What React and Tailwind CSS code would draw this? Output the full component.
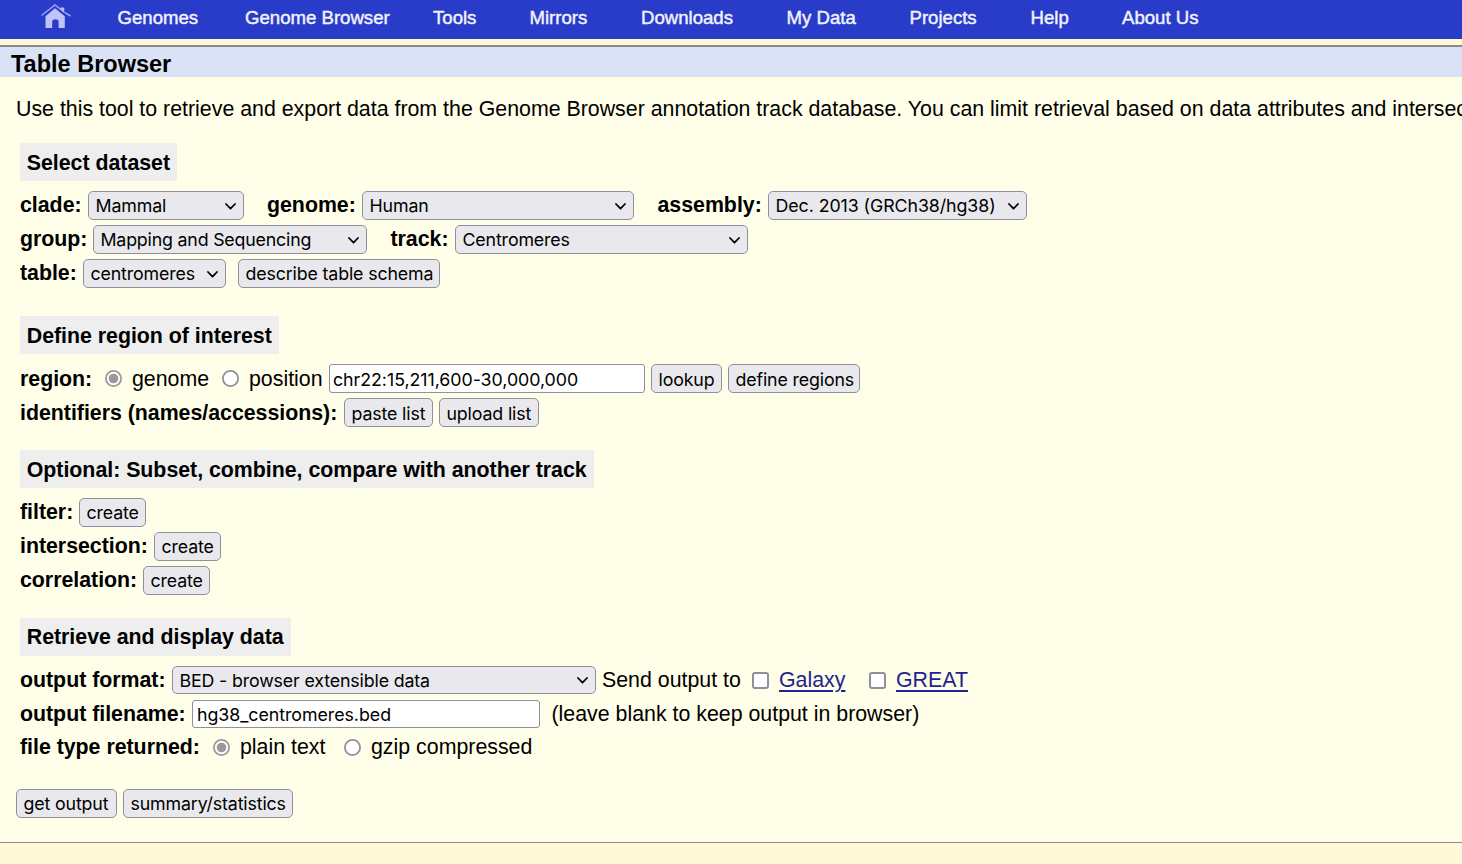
import React from "react";

const Label = ({ className = "", children }) => (
  <span className={`shrink-0 whitespace-nowrap font-bold leading-[28px] tracking-[-0.02px] ${className}`}>{children}</span>
);

const Text = ({ className = "", children }) => (
  <span className={`shrink-0 whitespace-nowrap leading-[28px] ${className}`}>{children}</span>
);

const Select = ({ className = "", tracking = "tracking-[-0.14px]", height = "h-[29px]", children }) => (
  <div
    role="combobox"
    className={`flex shrink-0 items-center justify-between rounded-[5px] border border-[#8f8f9d] bg-[#e9e9ed] pl-[6.5px] pr-[7.5px] font-['Inter',sans-serif] text-[17.8px] ${height} ${className}`}
  >
    <span className={`whitespace-nowrap pt-px leading-[26px] ${tracking}`}>{children}</span>
    <svg className="mt-px h-[7px] w-[11px] shrink-0" viewBox="0 0 11 7" fill="none" stroke="black" strokeWidth="1.75" strokeLinecap="round" strokeLinejoin="round">
      <path d="M1 1 L5.5 5.7 L10 1" />
    </svg>
  </div>
);

const Button = ({ className = "", textClass = "pt-px", children }) => (
  <button
    type="button"
    className={`flex h-[29px] shrink-0 items-center rounded-[5px] border border-[#8f8f9d] bg-[#e9e9ed] pl-[6.5px] font-['Inter',sans-serif] text-[17.8px] tracking-[-0.14px] ${className}`}
  >
    <span className={`whitespace-nowrap leading-[26px] ${textClass}`}>{children}</span>
  </button>
);

const Field = ({ className = "", value }) => (
  <input
    type="text"
    readOnly
    value={value}
    className={`shrink-0 rounded-[3px] border border-[#8f8f9d] bg-white font-['Inter',sans-serif] text-[17.8px] tracking-[-0.04px] ${className}`}
  />
);

const Radio = ({ checked, className = "mt-[6px]" }) => (
  <svg className={`h-[17px] w-[17px] shrink-0 ${className}`} viewBox="0 0 17 17">
    <circle cx="8.5" cy="8.5" r="7.6" fill="white" stroke={checked ? "#9a9a9a" : "#8f8f9d"} strokeWidth="1.8" />
    {checked && <circle cx="8.5" cy="8.5" r="4.8" fill="#999999" />}
  </svg>
);

const Check = ({ className = "" }) => (
  <span className={`mt-[6px] h-[17px] w-[17px] shrink-0 rounded-[3px] border-2 border-[#8f8f9d] bg-white ${className}`} />
);

const Heading = ({ className = "", leading = "leading-[40px]", children }) => (
  <h2 className={`h-[38px] whitespace-nowrap bg-[#eeeeee] pl-[6.75px] font-bold tracking-[-0.02px] ${leading} ${className}`}>{children}</h2>
);

const Row = ({ className = "h-[34px]", children }) => <div className={`flex items-start ${className}`}>{children}</div>;

export default function App() {
  return (
    <div className="flex h-[864px] w-full flex-col overflow-hidden bg-[#fff8d9] font-['Liberation_Sans',sans-serif] text-[21.35px] text-black">
      <nav className="flex h-[39px] shrink-0 items-start whitespace-nowrap bg-[#293bc9] pl-[41px] text-[18.6px] leading-[35px] text-[#f2f2fb] [-webkit-text-stroke:0.45px_#f2f2fb]">
        <a className="w-[76.5px] pt-[4px]">
          <svg className="h-[25px] w-[30px]" viewBox="0 0 30 25">
            <path d="M0.5 11.5 L14 1 L20 5.6 M23.5 8.3 L29.5 12" fill="none" stroke="#9da3ee" strokeWidth="1.5" />
            <path d="M19.5 3.6 H23.3 V9 L19.5 6 Z" fill="#b9bdf6" />
            <path d="M4.5 12.2 L14 4.3 L23.8 12.2 V24 H17.6 V17.5 Q17.4 15.2 14.4 15.2 Q11.4 15.2 11.2 17.5 V24 H4.5 Z" fill="#bfc3f6" />
          </svg>
        </a>
        <a className="w-[127.5px]">Genomes</a>
        <a className="w-[188px]">Genome Browser</a>
        <a className="w-[96.5px]">Tools</a>
        <a className="w-[111.5px]">Mirrors</a>
        <a className="w-[145.5px]">Downloads</a>
        <a className="w-[123px]">My Data</a>
        <a className="w-[121px]">Projects</a>
        <a className="w-[91.5px]">Help</a>
        <a>About Us</a>
      </nav>

      <main className="mt-[6px] flex h-[798px] shrink-0 flex-col items-stretch border-b border-t-2 border-b-[#8a8a8a] border-t-[#888888] bg-[#fffee8]">
        <h1 className="h-[30px] shrink-0 bg-[#dae2f5] pl-[11px] text-[23.5px] font-bold leading-[34px]">Table Browser</h1>
        <p className="mt-[19px] h-[26px] whitespace-nowrap pl-[16px] leading-[26px]">
          Use this tool to retrieve and export data from the Genome Browser annotation track database. You can limit retrieval based on data attributes and intersec
        </p>

        <div className="mt-[21px] pl-[20px]">
          <Heading className="w-[157px]">Select dataset</Heading>
          <div className="mt-[10px]">
            <Row>
              <Label className="w-[68px]">clade:</Label>
              <Select className="w-[156px]">Mammal</Select>
              <Label className="ml-[23px] w-[95px]">genome:</Label>
              <Select className="w-[272px]">Human</Select>
              <Label className="ml-[23.5px] w-[110.5px]">assembly:</Label>
              <Select className="w-[259px]" tracking="tracking-[-0.07px]">Dec. 2013 (GRCh38/hg38)</Select>
            </Row>
            <Row>
              <Label className="w-[73px]">group:</Label>
              <Select className="w-[274px]" tracking="tracking-[-0.19px]">Mapping and Sequencing</Select>
              <Label className="ml-[23.5px] w-[64.5px]">track:</Label>
              <Select className="w-[293px]">Centromeres</Select>
            </Row>
            <Row>
              <Label className="w-[63px]">table:</Label>
              <Select className="w-[143px]">centromeres</Select>
              <Button className="ml-[12px] w-[202px]">describe table schema</Button>
            </Row>
          </div>
        </div>

        <div className="mt-[23px] pl-[20px]">
          <Heading className="w-[259px]">Define region of interest</Heading>
          <div className="mt-[10px]">
            <Row>
              <Label className="w-[85px] pt-px">region:</Label>
              <Radio checked />
              <Text className="ml-[10px] w-[90px] pt-px">genome</Text>
              <Radio />
              <Text className="ml-[10px] w-[80px] pt-px">position</Text>
              <Field className="h-[29px] w-[316px] pl-[3px] pt-[2px]" value="chr22:15,211,600-30,000,000" />
              <Button className="ml-[6px] w-[71px]" textClass="pt-[3px]">lookup</Button>
              <Button className="ml-[6px] w-[132px]" textClass="pt-[3px]">define regions</Button>
            </Row>
            <Row>
              <Label className="w-[324px] pt-px">identifiers (names/accessions):</Label>
              <Button className="w-[89px]" textClass="pt-[3px]">paste list</Button>
              <Button className="ml-[6px] w-[100px]" textClass="pt-[3px]">upload list</Button>
            </Row>
          </div>
        </div>

        <div className="mt-[18px] pl-[20px]">
          <Heading className="w-[574px]">Optional: Subset, combine, compare with another track</Heading>
          <div className="mt-[10px]">
            <Row>
              <Label className="w-[59px]">filter:</Label>
              <Button className="w-[67px]">create</Button>
            </Row>
            <Row>
              <Label className="w-[134px]">intersection:</Label>
              <Button className="w-[67px]">create</Button>
            </Row>
            <Row>
              <Label className="w-[123px]">correlation:</Label>
              <Button className="w-[67px]">create</Button>
            </Row>
          </div>
        </div>

        <div className="mt-[18px] pl-[20px]">
          <Heading className="w-[271px]" leading="leading-[38px]">Retrieve and display data</Heading>
          <div className="mt-[10px]">
            <Row>
              <Label className="w-[152px]">output format:</Label>
              <Select className="w-[424px]" height="h-[28px]">BED - browser extensible data</Select>
              <Text className="ml-[6px] w-[150px]">Send output to</Text>
              <Check />
              <a className="ml-[10px] w-[90px] leading-[28px] text-[#1b2592] underline decoration-2 underline-offset-[3px]">Galaxy</a>
              <Check />
              <a className="ml-[10px] leading-[28px] text-[#1b2592] underline decoration-2 underline-offset-[3px]">GREAT</a>
            </Row>
            <Row className="h-[33px]">
              <Label className="w-[172px]">output filename:</Label>
              <Field className="h-[28px] w-[348px] pl-[4px]" value="hg38_centromeres.bed" />
              <Text className="ml-[11.5px]">(leave blank to keep output in browser)</Text>
            </Row>
            <Row className="h-[29px]">
              <Label className="w-[193px]">file type returned:</Label>
              <Radio checked />
              <Text className="ml-[10px] w-[104px]">plain text</Text>
              <Radio />
              <Text className="ml-[10px]">gzip compressed</Text>
            </Row>
          </div>
        </div>

        <div className="mt-[27px] flex gap-[6px] pl-[16px]">
          <Button className="w-[101px]">get output</Button>
          <Button className="w-[170px]">summary/statistics</Button>
        </div>
      </main>
    </div>
  );
}
